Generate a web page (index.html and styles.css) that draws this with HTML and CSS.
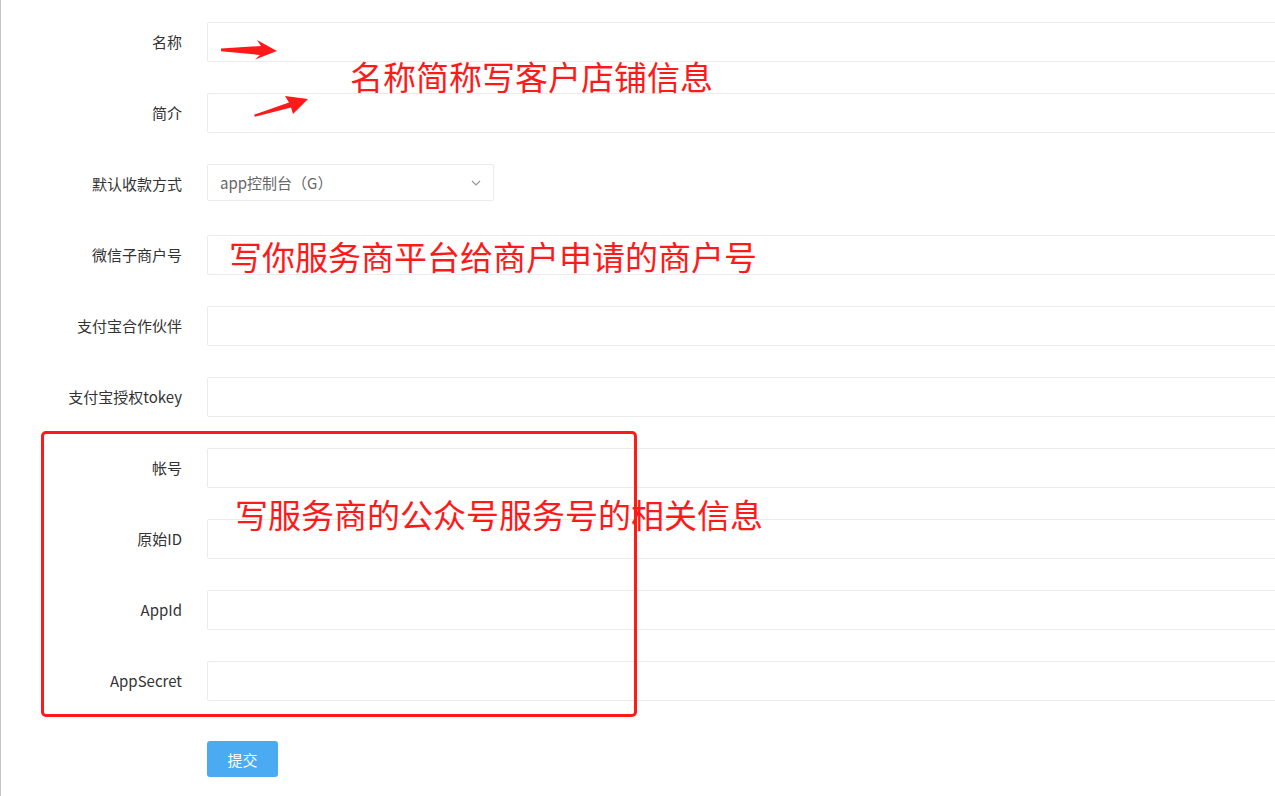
FILE: index.html
```html
<!DOCTYPE html>
<html lang="zh-CN">
<head>
    <meta charset="UTF-8">
    <meta name="viewport" content="width=device-width, initial-scale=1.0">
    <title>商户信息</title>
    <link rel="stylesheet" href="styles.css">
</head>
<body>
    <div class="page">
        <form class="merchant-form">
            <div class="form-group">
                <label>名称</label>
                <input type="text" class="form-control">
            </div>
            <div class="form-group">
                <label>简介</label>
                <input type="text" class="form-control">
            </div>
            <div class="form-group">
                <label>默认收款方式</label>
                <div class="select-box">
                    <span>app控制台（G）</span>
                    <svg class="chevron" width="10" height="6" viewBox="0 0 10 6"><path d="M1 1l4 4 4-4" fill="none" stroke="#999" stroke-width="1.2"/></svg>
                </div>
            </div>
            <div class="form-group">
                <label>微信子商户号</label>
                <input type="text" class="form-control">
            </div>
            <div class="form-group">
                <label>支付宝合作伙伴</label>
                <input type="text" class="form-control">
            </div>
            <div class="form-group">
                <label>支付宝授权tokey</label>
                <input type="text" class="form-control">
            </div>
            <div class="form-group">
                <label>帐号</label>
                <input type="text" class="form-control">
            </div>
            <div class="form-group">
                <label>原始ID</label>
                <input type="text" class="form-control">
            </div>
            <div class="form-group">
                <label>AppId</label>
                <input type="text" class="form-control">
            </div>
            <div class="form-group">
                <label>AppSecret</label>
                <input type="text" class="form-control">
            </div>
            <div class="form-actions">
                <button type="button" class="btn btn-primary">提交</button>
            </div>
        </form>

        <!-- annotations drawn on top of the screenshot -->
        <svg class="arrow arrow-name" width="60" height="22" viewBox="218 39 60 22">
            <polygon points="221,48.6 261,46 257,40 277,51 255,59.5 260,55 221,51.2" fill="#ff1a1a"/>
        </svg>
        <svg class="arrow arrow-intro" width="58" height="26" viewBox="252 93 58 26">
            <polygon points="254,114.8 289,102.5 285,96 308,99 293,114 291,107.5 255,116.8" fill="#ff1a1a"/>
        </svg>
        <div class="note note-shop">名称简称写客户店铺信息</div>
        <div class="note note-mch">写你服务商平台给商户申请的商户号</div>
        <div class="note-box"></div>
        <div class="note note-mp">写服务商的公众号服务号的相关信息</div>
    </div>
</body>
</html>
```

FILE: styles.css
```css
html, body {
    margin: 0;
    padding: 0;
    overflow: hidden;
}

body {
    font-family: "Noto Sans CJK SC", "Noto Sans", sans-serif;
    background-color: white;
    color: #333;
    border-left: 1px solid #c4c4c4;
    height: 796px;
    box-sizing: border-box;
}

.page {
    position: relative;
}

.merchant-form {
    padding-top: 22px;
    display: flex;
    flex-direction: column;
    gap: 31px;
}

.form-group {
    display: flex;
    align-items: flex-start;
    height: 40px;
}

.form-group label {
    width: 181px;
    flex: none;
    text-align: right;
    font-size: 15px;
    line-height: 39px;
    color: #333;
    margin-right: 25px;
}

.form-control {
    flex: 1;
    height: 40px;
    margin: 0 -20px 0 0;
    padding: 0 12px;
    border: 1px solid #ebebeb;
    border-radius: 2px;
    box-sizing: border-box;
    font: inherit;
    outline: none;
}

.select-box {
    width: 287px;
    height: 37px;
    box-sizing: border-box;
    border: 1px solid #ebebeb;
    border-radius: 2px;
    display: flex;
    align-items: center;
    justify-content: space-between;
    padding: 0 12px 0 12px;
    font-size: 15px;
    color: #666;
}

.chevron {
    margin-top: 1px;
}

.form-actions {
    padding-left: 206px;
    margin-top: 9px;
}

.btn {
    height: 36px;
    padding: 0;
    border: none;
    border-radius: 3px;
    font-family: inherit;
    font-size: 15px;
    cursor: pointer;
}

.btn-primary {
    background-color: #4aaaf2;
    color: white;
    width: 71px;
}

.arrow {
    position: absolute;
}

.arrow-name {
    left: 217px;
    top: 39px;
}

.arrow-intro {
    left: 251px;
    top: 93px;
}

.note {
    position: absolute;
    font-size: 33px;
    line-height: 1;
    color: #ff1a1a;
    white-space: nowrap;
}

.note-shop {
    left: 349px;
    top: 60px;
}

.note-mch {
    left: 228px;
    top: 240px;
}

.note-mp {
    left: 234px;
    top: 498px;
}

.note-box {
    position: absolute;
    left: 40px;
    top: 431px;
    width: 596px;
    height: 286px;
    border: 3px solid #ff1a1a;
    border-radius: 5px;
    box-sizing: border-box;
}
```
